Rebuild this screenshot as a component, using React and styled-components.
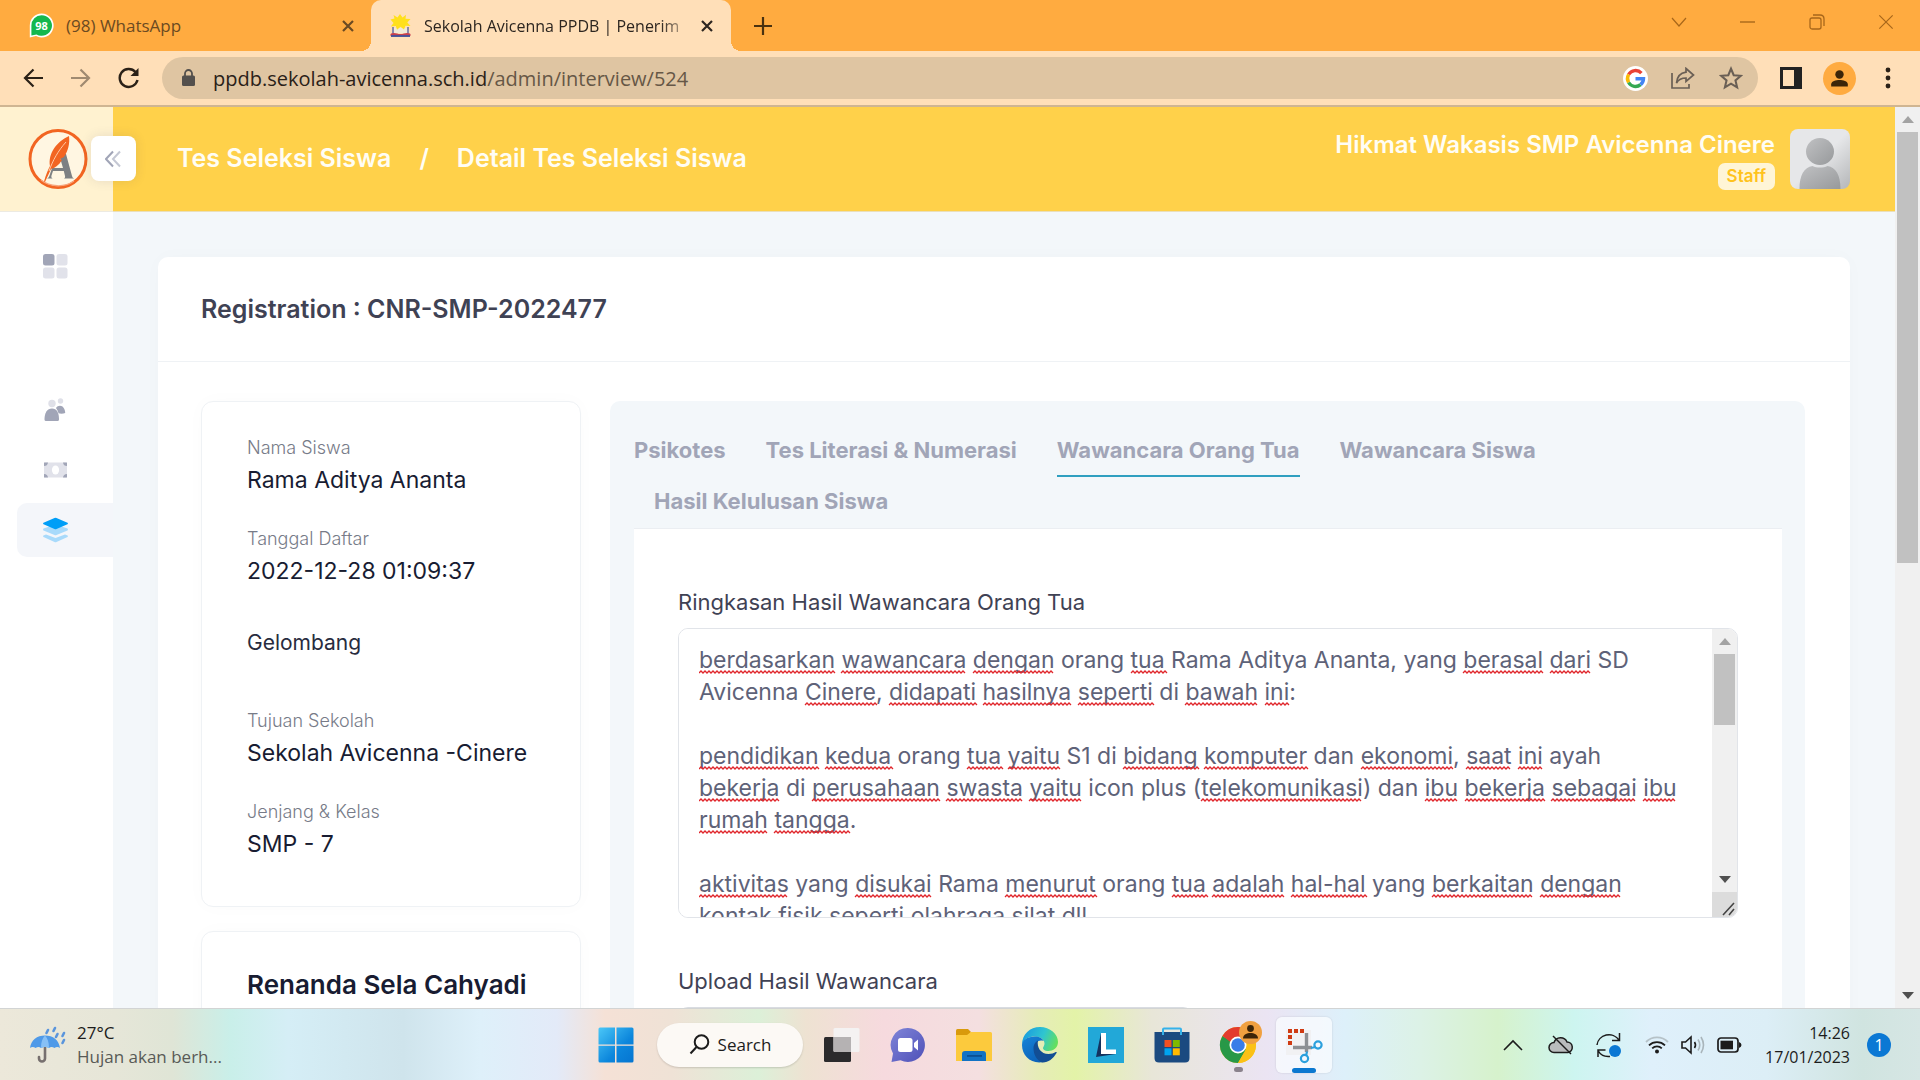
import React, { useLayoutEffect, useState } from "react";
import styled, { createGlobalStyle } from "styled-components";

const pageFont = `Inter, "Open Sans", sans-serif`;
const systemFont = `"Open Sans", "Noto Sans", sans-serif`;

const GlobalStyle = createGlobalStyle`
  *, *::before, *::after { box-sizing: border-box; }
  body { margin: 0; font-family: ${pageFont}; color: #181c32; background: #f3f7fa; }
  button { border: 0; padding: 0; background: none; font: inherit; color: inherit; cursor: pointer; }
  a { color: inherit; text-decoration: none; }
  h1, h2, p, dl, dd, dt, ul { margin: 0; padding: 0; }
  ul { list-style: none; }
  svg { display: block; flex: none; }
`;

const Screen = styled.div`
  height: 100vh;
  display: flex;
  flex-direction: column;
  overflow: hidden;
`;

/* ---------- browser chrome ---------- */

const TabStrip = styled.div`
  flex: none;
  height: 51px;
  display: flex;
  align-items: center;
  background: #ffab40;
  font-family: ${systemFont};
  font-size: 17px;
`;

const BrowserTab = styled.div`
  position: relative;
  align-self: stretch;
  width: ${(p) => (p.$active ? 360 : 371)}px;
  display: flex;
  align-items: center;
  gap: 12px;
  padding: 0 ${(p) => (p.$active ? 16 : 15)}px 0 ${(p) => (p.$active ? 18 : 29)}px;
  background: ${(p) => (p.$active ? "#ffdfb8" : "transparent")};
  color: ${(p) => (p.$active ? "#2d2620" : "#6b4a22")};
  font-size: ${(p) => (p.$active ? 16 : 17)}px;
  border-radius: 10px 10px 0 0;
  ${(p) =>
    p.$active &&
    `
    &::before, &::after {
      content: "";
      position: absolute;
      bottom: 0;
      width: 10px;
      height: 10px;
    }
    &::before { left: -10px; background: radial-gradient(circle at 0 0, transparent 10px, #ffdfb8 10px); }
    &::after { right: -10px; background: radial-gradient(circle at 100% 0, transparent 10px, #ffdfb8 10px); }
  `}
`;

const TabTitle = styled.span`
  flex: 1;
  white-space: nowrap;
  ${(p) => p.$fade && "mask-image: linear-gradient(90deg, #000 90%, rgba(0, 0, 0, 0.2));"}
`;

const IconButton = styled.button`
  flex: none;
  width: ${(p) => p.$w || 24}px;
  height: ${(p) => p.$h || 24}px;
  display: flex;
  align-items: center;
  justify-content: center;
`;

const NewTab = styled(IconButton)`
  margin-left: 20px;
  color: #4a3210;
`;

const WindowControls = styled.div`
  margin-left: auto;
  display: flex;
  padding-bottom: 8px;
  color: #a8671a;
`;

const Toolbar = styled.div`
  flex: none;
  height: 56px;
  display: flex;
  align-items: center;
  padding: 0 9px;
  background: #ffdfb8;
  border-bottom: 2px solid #cfb592;
  color: #2b2117;
`;

const AddressBar = styled.form`
  flex: 1;
  height: 42px;
  display: flex;
  align-items: center;
  margin: 0 9px;
  padding: 0 3px 0 18px;
  border-radius: 21px;
  background: #dfc5a2;
  color: #6a5f55;
`;

const UrlText = styled.a`
  flex: 1;
  margin-left: 16px;
  font-family: ${systemFont};
  font-size: 20px;
  color: #665746;

  b { font-weight: 400; color: #2a2118; }
`;

const ProfileDot = styled.span`
  width: 33px;
  height: 33px;
  border-radius: 50%;
  background: #ffab40;
  display: flex;
  align-items: center;
  justify-content: center;
`;

/* ---------- scroll bar ---------- */

const Track = styled.div`
  flex: none;
  width: ${(p) => p.$w}px;
  display: flex;
  flex-direction: column;
  background: #f0f0f0;
`;

const ArrowButton = styled.button`
  flex: none;
  height: 25px;
  display: flex;
  align-items: center;
  justify-content: center;
`;

const ThumbArea = styled.div`
  flex: 1;
  padding: 0 2px;
`;

const Thumb = styled.div`
  background: #c1c1c1;
`;

const Grip = styled.div`
  height: 25px;
  display: flex;
  align-items: flex-end;
  justify-content: flex-end;
  background: #dcdcdc;
`;

function ScrollBar({ width, thumb, grip }) {
  return (
    <Track $w={width}>
      <ArrowButton type="button" aria-label="Scroll up">
        <svg width="12" height="7"><path d="M0 7L6 0L12 7Z" fill="#a3a3a3" /></svg>
      </ArrowButton>
      <ThumbArea><Thumb style={{ height: thumb }} /></ThumbArea>
      <ArrowButton type="button" aria-label="Scroll down">
        <svg width="12" height="7"><path d="M0 0L6 7L12 0Z" fill="#505050" /></svg>
      </ArrowButton>
      {grip && (
        <Grip>
          <svg width="16" height="16"><path d="M2 14L13 2M8 14L13 8" stroke="#444" strokeWidth="1.6" /></svg>
        </Grip>
      )}
    </Track>
  );
}

/* ---------- web page ---------- */

const Viewport = styled.div`
  flex: 1;
  min-height: 0;
  display: flex;
  overflow: hidden;
`;

const Sidebar = styled.aside`
  flex: none;
  width: 113px;
  background: #fff;
`;

const Brand = styled.div`
  position: relative;
  height: 105px;
  display: flex;
  align-items: center;
  padding-left: 28px;
  background: #fff2d0;
  border-bottom: 1px solid #eceae2;
`;

const CollapseButton = styled.button`
  position: absolute;
  left: 91px;
  top: 29px;
  z-index: 1;
  width: 45px;
  height: 45px;
  display: flex;
  align-items: center;
  justify-content: center;
  border-radius: 8px;
  background: #fff;
  box-shadow: 0 0 12px rgba(60, 60, 90, 0.12);
`;

const SideNav = styled.nav`
  display: flex;
  flex-direction: column;
  padding: 27px 0 0 17px;
`;

const SideLink = styled.a`
  height: 54px;
  margin-bottom: ${(p) => p.$after || 6}px;
  display: flex;
  align-items: center;
  padding-left: 25px;
  border-radius: 10px 0 0 10px;
  background: ${(p) => (p.$active ? "#f4f6fa" : "transparent")};
`;

const Page = styled.div`
  flex: 1;
  min-width: 0;
  display: flex;
  flex-direction: column;
`;

const PageHeader = styled.header`
  flex: none;
  height: 105px;
  display: flex;
  align-items: center;
  justify-content: space-between;
  padding: 0 45px 0 64px;
  background: #ffd14a;
  border-bottom: 1px solid #eadfba;
  color: #fffdf4;
`;

const Crumbs = styled.nav`
  display: flex;
  gap: 28px;
  padding-bottom: 3px;
  font-size: 25px;
  line-height: 36px;
  font-weight: 600;
`;

const User = styled.div`
  display: flex;
  align-items: center;
  gap: 15px;
`;

const UserInfo = styled.div`
  display: flex;
  flex-direction: column;
  align-items: flex-end;
  gap: 2px;
  font-weight: 600;
`;

const UserName = styled.span`
  font-size: 24px;
  line-height: 32px;
`;

const Role = styled.span`
  padding: 0 9px;
  border-radius: 7px;
  background: #fff5d6;
  color: #ffc31c;
  font-size: 17px;
  line-height: 27px;
`;

const Main = styled.main`
  padding: 45px 45px 0;
`;

const Card = styled.section`
  background: #fff;
  border-radius: 10px;
  box-shadow: 0 0 20px rgba(76, 87, 125, 0.02);
`;

const CardHeader = styled.div`
  height: 105px;
  display: flex;
  align-items: center;
  padding: 0 43px;
  border-bottom: 1px solid #eff2f5;
`;

const CardTitle = styled.h1`
  font-size: 25px;
  line-height: 36px;
  font-weight: 600;
  color: #3f4254;
`;

const CardBody = styled.div`
  display: grid;
  grid-template-columns: 380px minmax(0, 1fr);
  gap: 29px;
  padding: 39px 45px 45px 43px;
`;

const Column = styled.div`
  display: flex;
  flex-direction: column;
  gap: 24px;
`;

const InfoCard = styled.section`
  padding: 32px 45px 44px;
  border: 1px solid #eff2f5;
  border-radius: 12px;
  background: #fff;
  box-shadow: 0 0 20px rgba(76, 87, 125, 0.02);
`;

const InfoList = styled.dl`
  display: flex;
  flex-direction: column;
  gap: 27px;
`;

const InfoItem = styled.div`
  min-height: 64px;
`;

const InfoLabel = styled.dt`
  font-size: ${(p) => (p.$large ? 21 : 18)}px;
  line-height: ${(p) => (p.$large ? 54 : 28)}px;
  font-weight: ${(p) => (p.$large ? 400 : 300)};
  color: ${(p) => (p.$large ? "#282c3e" : "#777b88")};
`;

const InfoValue = styled.dd`
  font-size: 23px;
  line-height: 36px;
  white-space: nowrap;
`;

const PersonName = styled.h2`
  font-size: 26px;
  line-height: 42px;
  font-weight: 600;
  white-space: nowrap;
`;

const Panel = styled.section`
  padding: 25px 23px 0 24px;
  border-radius: 10px;
  background: #f3f7fa;
`;

const Tabs = styled.nav`
  display: flex;
  flex-wrap: wrap;
  border-bottom: 1px solid #ebeef2;
`;

const TabLink = styled.a`
  margin: 0 20px;
  border-bottom: 2px solid ${(p) => (p.$active ? "#2f9fc0" : "transparent")};
  font-size: 22px;
  line-height: 49px;
  font-weight: 700;
  color: #a1a5b7;

  &:first-child { margin-left: 0; }
`;

const TabContent = styled.div`
  padding: 58px 44px 40px;
  background: #fff;
`;

const FieldLabel = styled.label`
  display: block;
  margin-bottom: 11px;
  font-size: 22px;
  line-height: 30px;
  color: #3f4254;
`;

const TextBox = styled.div`
  position: relative;
  display: flex;
  height: 290px;
  margin-bottom: 48px;
  border: 1px solid #e1e4e9;
  border-radius: 10px;
  overflow: hidden;
`;

const Summary = styled.textarea`
  flex: 1;
  min-width: 0;
  padding: 15px 0 0 20px;
  border: 0;
  outline: 0;
  resize: none;
  overflow: hidden;
  white-space: pre;
  background: #fff;
  color: #5e6278;
  font: 400 23px/32px ${pageFont};
`;

const Squiggles = styled.svg`
  position: absolute;
  left: 20px;
  top: 15px;
  pointer-events: none;
`;

const FileField = styled.input`
  width: 515px;
  height: 60px;
  padding: 12px 20px;
  border: 1px solid #d9dce1;
  border-radius: 10px;
  font: 400 22px/32px ${pageFont};
`;

const summaryLines = [
  "berdasarkan wawancara dengan orang tua Rama Aditya Ananta, yang berasal dari SD",
  "Avicenna Cinere, didapati hasilnya seperti di bawah ini:",
  "",
  "pendidikan kedua orang tua yaitu S1 di bidang komputer dan ekonomi, saat ini ayah",
  "bekerja di perusahaan swasta yaitu icon plus (telekomunikasi) dan ibu bekerja sebagai ibu",
  "rumah tangga.",
  "",
  "aktivitas yang disukai Rama menurut orang tua adalah hal-hal yang berkaitan dengan",
  "kontak fisik seperti olahraga silat dll",
];

const knownWords = new Set(
  "orang Rama Aditya Ananta yang SD Avicenna di S1 dan ayah icon plus".split(" ")
);

function wave(x, y, width) {
  let d = `M${x} ${y + 1}`;
  for (let i = 0; i < width; i += 4) d += "l2 -2l2 2";
  return d;
}

function SpellMarks() {
  const [paths, setPaths] = useState([]);
  useLayoutEffect(() => {
    const ctx = document.createElement("canvas").getContext("2d");
    ctx.font = `400 23px ${pageFont}`;
    const found = [];
    summaryLines.forEach((line, row) => {
      for (const match of line.matchAll(/[\w-]+/g)) {
        if (knownWords.has(match[0])) continue;
        const x = ctx.measureText(line.slice(0, match.index)).width;
        const width = ctx.measureText(match[0]).width;
        found.push(wave(Math.round(x), row * 32 + 28, width - 2));
      }
    });
    setPaths(found);
  }, []);
  return (
    <Squiggles width="1010" height="270" aria-hidden="true">
      {paths.map((d) => (
        <path key={d} d={d} fill="none" stroke="#e0262b" strokeWidth="1.3" />
      ))}
    </Squiggles>
  );
}

/* ---------- taskbar ---------- */

const Taskbar = styled.footer`
  flex: none;
  height: 72px;
  display: grid;
  grid-template-columns: 1fr auto 1fr;
  border-top: 1px solid #d2d4d4;
  font-family: ${systemFont};
  font-size: 17px;
  color: #1c1c1c;
  background: linear-gradient(
    90deg,
    #ece8da 0%, #e6e6d8 6%, #dfe5d6 9%, #c9efe9 12%, #d5eef6 15%, #cfe4ec 21%,
    #def0fa 25%, #e3eaf8 29%, #f5e1d6 31.5%, #efe2d6 35%, #dcf0d8 39.5%, #eee2d2 42%,
    #f6dade 46%, #f4dfe0 51%, #e6ecb8 54%, #e3f3a8 56%, #e8e6d8 60%, #ebe4f3 66%,
    #ddf0fa 70%, #dcf2e6 74%, #d6f2cc 78%, #cdf5f0 82%, #dff0fb 86%, #dceef6 92%,
    #d0e4e0 97%, #d6e6e4 100%
  );
`;

const Weather = styled.button`
  justify-self: start;
  display: flex;
  align-items: center;
  gap: 10px;
  padding-left: 29px;
  text-align: left;
  line-height: 24px;
  color: #585a56;

  strong { display: block; font-weight: 400; color: #1c1c1c; }
`;

const Apps = styled.div`
  display: flex;
  align-items: center;
`;

const AppButton = styled.button`
  position: relative;
  width: 66px;
  height: 56px;
  display: flex;
  align-items: center;
  justify-content: center;

  &::after {
    content: "";
    position: absolute;
    bottom: ${(p) => (p.$active ? 0 : 1)}px;
    width: ${(p) => (p.$active ? 24 : p.$running ? 9 : 0)}px;
    height: 5px;
    border-radius: 3px;
    background: ${(p) => (p.$active ? "#0b78d0" : "#8a828c")};
  }
`;

const ActiveTile = styled.span`
  width: 56px;
  height: 56px;
  display: flex;
  align-items: center;
  justify-content: center;
  border-radius: 6px;
  background: rgba(250, 252, 255, 0.75);
  box-shadow: 0 0 2px rgba(0, 0, 0, 0.15);
`;

const SearchPill = styled.button`
  width: 146px;
  height: 44px;
  margin: 0 6px 0 8px;
  display: flex;
  align-items: center;
  justify-content: center;
  gap: 8px;
  border-radius: 22px;
  background: #fcf9f5;
  box-shadow: 0 1px 2px rgba(0, 0, 0, 0.15);
`;

const Tray = styled.div`
  justify-self: end;
  display: flex;
  align-items: center;
  padding-right: 29px;
`;

const Clock = styled.time`
  margin: 0 17px 0 12px;
  text-align: right;
  font-size: 16px;
  line-height: 24px;

  span { display: block; }
`;

const Notice = styled.span`
  width: 24px;
  height: 24px;
  border-radius: 50%;
  background: #0b78d4;
  color: #fff;
  font-size: 16px;
  line-height: 24px;
  text-align: center;
`;

/* ---------- drawings ---------- */

const Cross = ({ size = 12, w = 2.2 }) => (
  <svg width={size} height={size} viewBox="0 0 12 12">
    <path d="M1 1L11 11M11 1L1 11" stroke="currentColor" strokeWidth={w} />
  </svg>
);

const PersonShape = ({ size, fill = "#3c2508" }) => (
  <svg width={size} height={size} viewBox="0 0 24 24" fill={fill}>
    <circle cx="12" cy="7.5" r="4.8" />
    <path d="M2.5 21v-2.5C2.5 15 8 13.6 12 13.6s9.5 1.4 9.5 4.9V21Z" />
  </svg>
);

const GoogleIcon = () => (
  <svg width="25" height="25" viewBox="0 0 25 25">
    <circle cx="12.5" cy="12.5" r="12.5" fill="#fff" />
    <g fill="none" strokeWidth="3.4">
      <path d="M18.4 7.1A8 8 0 0 0 5.6 8.5" stroke="#ea4335" />
      <path d="M5.6 8.5A8 8 0 0 0 5.6 16.5" stroke="#fbbc05" />
      <path d="M5.6 16.5A8 8 0 0 0 17.6 18.6" stroke="#34a853" />
      <path d="M17.6 18.6A8 8 0 0 0 20.5 12.7H12.5" stroke="#4285f4" />
    </g>
  </svg>
);

const WhatsAppIcon = () => (
  <svg width="25" height="25" viewBox="0 0 25 25">
    <path d="M12.5.5a12 12 0 1 1-5.5 22.6L.8 24.500V12.500A12 12 0 0 1 12.500.5Z" fill="#fff" />
    <path d="M12.5 2.2a10.300 10.300 0 1 1-5 19.200L2.400 22.500V12.500A10.300 10.300 0 0 1 12.500 2.200Z" fill="#14b84e" />
    <text x="12.5" y="16.5" fontSize="11" fontWeight="700" fontFamily="Open Sans, sans-serif" fill="#fff" textAnchor="middle">98</text>
  </svg>
);

const SchoolIcon = () => (
  <svg width="23" height="24" viewBox="0 0 23 24">
    <path d="M4 13V21M19 13V21" stroke="#5a66a6" strokeWidth="1.4" />
    <path d="M5 14h13v5H5Z" fill="#f1e9d8" />
    <path d="M2 19.5c4-1.500 6 .5 9.500.5s5.500-2 9.500-.5l1 2H1Z" fill="#c8404e" />
    <path d="M2 22h19" stroke="#3c4a98" strokeWidth="1.8" />
    <path d="M1.500 5.500l4-1L4.500 1l4 2.500L11 0l2.500 3.500L17 .8l-.5 4 5 .2-3.200 3.500L21.500 12l-5-.3-1.500 3.800-3.500-2.800L8 15.800 6.800 12l-5 .5L4.500 9Z" fill="#ffe01c" />
  </svg>
);

const Logo = () => (
  <svg width="60" height="60" viewBox="0 0 60 60">
    <ellipse cx="30" cy="30" rx="28" ry="28.5" fill="#fff6e2" stroke="#f26522" strokeWidth="3" />
    <path d="M13 51C22 58 36 59 46 52" fill="none" stroke="#f8a57c" strokeWidth="1.3" />
    <path d="M33 25h5l6 22c.5 1.5 1 2 2 2.5h-10c1.200-.6 1.300-1.500.9-3L35.800 42H25l-1.500 4.500c-.4 1.500 0 2.500 1.200 3H19c1.500-.7 2-1.500 2.500-3L24 39h11l-3.200-11Z" fill="#7d8083" />
    <path d="M41 7c1 8-1 15-5 21l-4 2 2 1c-3 5-7 8-11 9l-6 13-1-.4C18 45 20 41 22 37c-2-12 6-24 19-30Z" fill="#f26522" />
    <path d="M38 13C30 22 25 31 21 42" stroke="#ffc9a5" strokeWidth="1" fill="none" />
  </svg>
);

const Avatar = () => (
  <svg width="60" height="60" viewBox="0 0 60 60" role="img" aria-label="Profile picture">
    <defs>
      <linearGradient id="avatarBack" x1="0" y1="0" x2="1" y2="1">
        <stop offset="0.5" stopColor="#e6e7e9" />
        <stop offset="1" stopColor="#b4b6b8" />
      </linearGradient>
      <linearGradient id="avatarBody" x1="0" y1="0" x2="1" y2="1">
        <stop offset="0" stopColor="#c0c1c3" />
        <stop offset="1" stopColor="#97999b" />
      </linearGradient>
      <clipPath id="avatarClip"><rect width="60" height="60" rx="8" /></clipPath>
    </defs>
    <g clipPath="url(#avatarClip)">
      <rect width="60" height="60" fill="url(#avatarBack)" />
      <ellipse cx="30" cy="22.5" rx="14" ry="13.5" fill="url(#avatarBody)" />
      <path d="M9.5 60C9.5 46 14 38.5 22.5 37c4 2 11 2 15 0C46 38.5 50.5 46 50.5 60Z" fill="url(#avatarBody)" />
    </g>
  </svg>
);

const GridIcon = () => (
  <svg width="26" height="26" viewBox="0 0 26 26" fill="#e1e2ea">
    <rect x="1" y="1" width="11.5" height="11.5" rx="2.5" fill="#a1a5b7" />
    <rect x="14.5" y="1" width="11" height="11.5" rx="2.5" />
    <rect x="1" y="14.5" width="11.5" height="11" rx="2.5" />
    <rect x="14.5" y="14.5" width="11" height="11" rx="2.5" />
  </svg>
);

const PeopleIcon = () => (
  <svg width="26" height="26" viewBox="0 0 26 26">
    <circle cx="10" cy="6.5" r="3.7" fill="#dfe0e8" />
    <circle cx="18.5" cy="4" r="2.7" fill="#dfe0e8" />
    <path d="M14 11c2-3.5 7-3 8.300 1 .6 1.600.9 2.500.9 4-2 .8-5 .8-6.700.2C16 14 15 12.500 14 11Z" fill="#a1a5b7" />
    <path d="M2.5 22.5C2.5 16 5 11.5 10 11.5s7 4.500 7 11c0 1-.8 1.500-2 1.500H4.500c-1.200 0-2-.5-2-1.500Z" fill="#a1a5b7" />
  </svg>
);

const CashIcon = () => (
  <svg width="26" height="26" viewBox="0 0 26 26">
    <rect x="2" y="5.5" width="23" height="15" rx="1.5" fill="#e1e2ea" />
    <ellipse cx="13.5" cy="13" rx="3.6" ry="4.6" fill="#fff" />
    <path d="M2 9V5.500h4A4 4 0 0 1 2 9ZM25 9V5.500h-4A4 4 0 0 0 25 9ZM2 17v3.500h4A4 4 0 0 0 2 17ZM25 17v3.500h-4A4 4 0 0 1 25 17Z" fill="#a1a5b7" />
  </svg>
);

const LayersIcon = () => (
  <svg width="26" height="26" viewBox="0 0 26 26">
    <path d="M1.5 18.5l2.5-1L13.500 21 23 17.500l2.500 1c.6.4.6 1 0 1.400L14.500 25q-1 .4-2 0L1.500 19.900c-.6-.4-.6-1 0-1.400Z" fill="#a8dafb" />
    <path d="M1.5 11.5l12-4 12 4c.6.4.6 1.500 0 1.900L14.500 18q-1 .4-2 0L1.500 13.400c-.6-.4-.6-1.500 0-1.900Z" fill="#a8dafb" />
    <path d="M1.5 5.8L12.500.9q1-.4 2 0l11 4.900c.6.4.6 1 0 1.400L14.500 12q-1 .5-2 0L1.500 7.200c-.6-.4-.6-1 0-1.400Z" fill="#009ef7" />
  </svg>
);

const UmbrellaIcon = () => (
  <svg width="38" height="38" viewBox="0 0 38 38">
    <path d="M16 19v13.500a3 3 0 0 1-6 0V31" fill="none" stroke="#77706f" strokeWidth="2.6" strokeLinecap="round" />
    <path d="M1 22C2 14 8 9.500 16 9.500S30 14 31 22c-1.500-1.500-4-1.500-5.500 0-2-1.500-4-1.500-5.500 0-2-1.500-6-1.500-8 0-1.500-1.500-3.500-1.500-5.500 0-1.500-1.500-4-1.500-5.500 0Z" fill="#4f9ae8" />
    <path d="M12 22c0-6 1.500-10 4-12.500 2.500 2.500 4 6.500 4 12.500-2-1.500-6-1.500-8 0Z" fill="#86c0f6" />
    <path d="M19 4l-1.500 3M26 2l-1.500 3M28.500 8l-1.500 3M35 7l-1.500 3M35 14l-1.500 3" stroke="#5a95dc" strokeWidth="2.6" strokeLinecap="round" />
  </svg>
);

const StartIcon = () => (
  <svg width="36" height="36" viewBox="0 0 36 36">
    <defs>
      <linearGradient id="startFill" gradientUnits="userSpaceOnUse" x1="0" y1="0" x2="36" y2="36">
        <stop offset="0" stopColor="#4cc9f8" />
        <stop offset="0.6" stopColor="#0c86dc" />
        <stop offset="1" stopColor="#0574d0" />
      </linearGradient>
    </defs>
    <path d="M2 .5h15v17H.5V2Q.5.5 2 .5ZM18.500.5H34q1.500 0 1.500 1.500v15.500h-17ZM.5 18.800H17v16.700H2Q.5 35.500.5 34ZM18.500 18.800h17V34q0 1.500-1.500 1.500H18.500Z" fill="url(#startFill)" />
  </svg>
);

const TaskViewIcon = () => (
  <svg width="36" height="36" viewBox="0 0 36 36">
    <rect x="0" y="10" width="27" height="25" rx="1.5" fill="#2b2a2c" />
    <rect x="9.5" y="1" width="26" height="24" rx="1.5" fill="#f4f2f2" />
    <path d="M9.5 10H27v15H11q-1.500 0-1.500-1.500Z" fill="#b5b2b3" />
  </svg>
);

const ChatIcon = () => (
  <svg width="36" height="36" viewBox="0 0 36 36">
    <defs>
      <linearGradient id="chatFill" x1="0" y1="0" x2="1" y2="1">
        <stop offset="0" stopColor="#7f85d8" />
        <stop offset="1" stopColor="#4f50b8" />
      </linearGradient>
    </defs>
    <path d="M18 1a17 17 0 1 1-7.5 32.300L1.500 35 3 26.500A17 17 0 0 1 18 1Z" fill="url(#chatFill)" />
    <rect x="8" y="11" width="14.5" height="14" rx="2.5" fill="#fff" />
    <path d="M24 16l4-3.500v11L24 20Z" fill="#fff" />
  </svg>
);

const FolderIcon = () => (
  <svg width="36" height="36" viewBox="0 0 36 36">
    <path d="M0 3.500Q0 2 1.500 2H12l3 3-3 4H0Z" fill="#d99a0c" />
    <path d="M0 8h11l4-3h19.500Q36 5 36 6.500V34H0Z" fill="#fcca3d" />
    <path d="M6 34v-7q0-3 3-3h18q3 0 3 3v7Z" fill="#1272c4" />
    <rect x="11" y="28" width="15" height="1.8" fill="#0b4f92" />
  </svg>
);

const EdgeIcon = () => (
  <svg width="38" height="38" viewBox="0 0 38 38">
    <defs>
      <linearGradient id="edgeTop" x1="0" y1="0.3" x2="1" y2="0.6">
        <stop offset="0" stopColor="#1a9be0" />
        <stop offset="0.55" stopColor="#2fc5d0" />
        <stop offset="1" stopColor="#66e05a" />
      </linearGradient>
      <linearGradient id="edgeLeft" x1="0" y1="0" x2="0.6" y2="1">
        <stop offset="0" stopColor="#1683d8" />
        <stop offset="1" stopColor="#0c62b8" />
      </linearGradient>
    </defs>
    <path d="M1 19C1 8 9 1 19 1s18 7 18 15c0 6-5 9-9.500 9-4 0-5.500-1.500-5.500-3 0-1 1.500-2 1.500-4.500 0-4-4-7-9.500-7S2 13 1 19Z" fill="url(#edgeTop)" />
    <path d="M1 19c0-5 6-8.500 12.500-8.500 5 0 8 2 9.200 4.500-6-2-9 2.500-8.200 8 .8 6 6 11 11.500 12C12 40 1 31 1 19Z" fill="url(#edgeLeft)" />
    <path d="M12.5 22c0-3 2-6.500 4.500-7.500-1.500 7 3 13.500 10.500 13.500 3 0 5.500-1 7.200-2 .8-.4 1.300.3.8 1C32 33 26.500 37 21 36.500 15.500 34 12.500 28.500 12.500 22Z" fill="#124e94" />
  </svg>
);

const LIcon = () => (
  <svg width="36" height="36" viewBox="0 0 36 36">
    <rect width="36" height="36" fill="#22a8d8" />
    <path d="M13 6L8 30l20-3H14Z" fill="#14335f" />
    <rect x="13" y="6" width="5" height="21" fill="#fff" />
    <rect x="13" y="22.5" width="15" height="4.5" fill="#fff" />
  </svg>
);

const StoreIcon = () => (
  <svg width="36" height="36" viewBox="0 0 36 36">
    <path d="M.5 5h35v26q0 4.500-4.500 4.500H5Q.5 35.500.5 31Z" fill="#1b4a80" />
    <path d="M9 8V2.500Q9 1.500 10 1.500h16q1 0 1 1V8" fill="none" stroke="#35b2ea" strokeWidth="2" />
    <rect x="10.5" y="13" width="7" height="7" fill="#f25022" />
    <rect x="18.8" y="13" width="7" height="7" fill="#7fba00" />
    <rect x="10.5" y="21.3" width="7" height="7" fill="#00a4ef" />
    <rect x="18.8" y="21.3" width="7" height="7" fill="#ffb900" />
  </svg>
);

const ChromeIcon = () => (
  <svg width="48" height="48" viewBox="0 0 48 48">
    <circle cx="24" cy="24" r="18" fill="#fbc116" />
    <path d="M24 24L8.400 15A18 18 0 0 0 24 42L31.800 28.500Z" fill="#279847" />
    <path d="M24 16h16.100A18 18 0 0 1 24 42L32 28.500Z" fill="#fbc116" />
    <path d="M8.400 15A18 18 0 0 1 40.100 16H24a8 8 0 0 0-7.500 5Z" fill="#e33b2e" />
    <circle cx="24" cy="24" r="8.5" fill="#fff" />
    <circle cx="24" cy="24" r="6.8" fill="#3a7de8" />
    <circle cx="36.500" cy="11.500" r="11.500" fill="#f0a040" />
    <circle cx="36.500" cy="7.500" r="3.4" fill="#3c2508" />
    <path d="M29 17.500c0-4 4-5.500 7.500-5.500s7.500 1.500 7.500 5.500Z" fill="#3c2508" />
  </svg>
);

const SnipIcon = () => (
  <svg width="38" height="38" viewBox="0 0 38 38">
    <rect x="1" y="4" width="25" height="25" fill="#f1f1f3" />
    <path d="M3 3h4v4H3ZM9 3h4v4H9ZM15 3h4v4h-4ZM3 9h4v4H3ZM3 15h4v4H3Z" fill="#cf3a12" />
    <path d="M21.500 7v19M8 21.500h19" stroke="#8d9094" strokeWidth="3.4" />
    <circle cx="33" cy="19" r="3.6" fill="none" stroke="#2ba0dd" strokeWidth="2.2" />
    <circle cx="19.5" cy="32.5" r="3.6" fill="none" stroke="#2ba0dd" strokeWidth="2.2" />
    <path d="M26 22l4.500-1M22 25.500l-1 4.500" stroke="#2ba0dd" strokeWidth="2.2" />
  </svg>
);

export default function App() {
  return (
    <Screen>
      <GlobalStyle />
      <TabStrip>
        <BrowserTab>
          <WhatsAppIcon />
          <TabTitle>(98) WhatsApp</TabTitle>
          <IconButton type="button" aria-label="Close tab" $w={16}><Cross /></IconButton>
        </BrowserTab>
        <BrowserTab $active>
          <SchoolIcon />
          <TabTitle $fade>Sekolah Avicenna PPDB | Penerim</TabTitle>
          <IconButton type="button" aria-label="Close tab" $w={16}><Cross /></IconButton>
        </BrowserTab>
        <NewTab type="button" aria-label="New tab">
          <svg width="18" height="18"><path d="M9 0V18M0 9H18" stroke="currentColor" strokeWidth="2.2" /></svg>
        </NewTab>
        <WindowControls>
          <IconButton type="button" aria-label="Search tabs" $w={69}>
            <svg width="16" height="10"><path d="M1 1L8 9L15 1" fill="none" stroke="currentColor" strokeWidth="1.2" /></svg>
          </IconButton>
          <IconButton type="button" aria-label="Minimize" $w={69}>
            <svg width="15" height="2"><path d="M0 1H15" stroke="currentColor" strokeWidth="1.4" /></svg>
          </IconButton>
          <IconButton type="button" aria-label="Restore" $w={69}>
            <svg width="16" height="16" fill="none" stroke="currentColor" strokeWidth="1.3">
              <rect x="1" y="4" width="11" height="11" rx="2" />
              <path d="M4 1H11Q15 1 15 5V12" />
            </svg>
          </IconButton>
          <IconButton type="button" aria-label="Close" $w={69}><Cross size={16} w={0.9} /></IconButton>
        </WindowControls>
      </TabStrip>

      <Toolbar>
        <IconButton type="button" aria-label="Back" $w={48}>
          <svg width="20" height="20" fill="none" stroke="#2b2117" strokeWidth="2.2"><path d="M20 10H2M10.500 1.500L2 10L10.500 18.500" /></svg>
        </IconButton>
        <IconButton type="button" aria-label="Forward" $w={48}>
          <svg width="20" height="20" fill="none" stroke="#a08a70" strokeWidth="2.2"><path d="M0 10H18M9.500 1.500L18 10L9.500 18.500" /></svg>
        </IconButton>
        <IconButton type="button" aria-label="Reload" $w={48}>
          <svg width="22" height="22" fill="none" stroke="#2b2117" strokeWidth="2.4">
            <path d="M17.500 5A9 9 0 1 0 19.500 13" />
            <path d="M20.500 1V9H12.500Z" fill="#2b2117" stroke="none" />
          </svg>
        </IconButton>
        <AddressBar>
          <svg width="17" height="18" viewBox="0 0 17 18">
            <rect x="2" y="6.5" width="13" height="10.5" rx="1.5" fill="#54504d" />
            <path d="M5 7V4.500a3.500 3.500 0 0 1 7 0V7" fill="none" stroke="#54504d" strokeWidth="1.8" />
          </svg>
          <UrlText href="#interview"><b>ppdb.sekolah-avicenna.sch.id</b>/admin/interview/524</UrlText>
          <IconButton type="button" aria-label="Google" $w={48}><GoogleIcon /></IconButton>
          <IconButton type="button" aria-label="Share" $w={48}>
            <svg width="24" height="22" fill="none" stroke="currentColor" strokeWidth="1.7">
              <path d="M1 6V21H18V17" />
              <path d="M15 1.500L22.500 8L15 14.500V11C10.500 11 7.500 12.500 5.500 16C6 10 9.500 6 15 5.200Z" />
            </svg>
          </IconButton>
          <IconButton type="button" aria-label="Bookmark" $w={48}>
            <svg width="24" height="24" viewBox="0 0 22 22" fill="none" stroke="currentColor" strokeWidth="1.9">
              <path d="M11 2.500L13.500 8.400L20 9L15.100 13.200L16.600 19.500L11 16.200L5.400 19.500L6.900 13.200L2 9L8.500 8.400Z" />
            </svg>
          </IconButton>
        </AddressBar>
        <IconButton type="button" aria-label="Side panel" $w={48}>
          <svg width="22" height="22"><rect x="1.5" y="1.5" width="19" height="19" fill="none" stroke="#222" strokeWidth="3" /><rect x="14" y="1" width="7" height="20" fill="#222" /></svg>
        </IconButton>
        <IconButton type="button" aria-label="Profile" $w={49}>
          <ProfileDot><PersonShape size={21} /></ProfileDot>
        </IconButton>
        <IconButton type="button" aria-label="Menu" $w={47}>
          <svg width="6" height="22" fill="#2b2117"><circle cx="3" cy="3" r="2.4" /><circle cx="3" cy="11" r="2.4" /><circle cx="3" cy="19" r="2.4" /></svg>
        </IconButton>
      </Toolbar>

      <Viewport>
        <Sidebar>
          <Brand>
            <Logo />
            <CollapseButton type="button" aria-label="Collapse menu">
              <svg width="18" height="18" fill="none" strokeWidth="2">
                <path d="M8 1.500L1 9L8 16.500" stroke="#a1a5b7" />
                <path d="M15 1.500L8 9L15 16.500" stroke="#c4c7d3" />
              </svg>
            </CollapseButton>
          </Brand>
          <SideNav aria-label="Main">
            <SideLink href="#dashboard" aria-label="Dashboard" $after={90}><GridIcon /></SideLink>
            <SideLink href="#students" aria-label="Students"><PeopleIcon /></SideLink>
            <SideLink href="#payments" aria-label="Payments"><CashIcon /></SideLink>
            <SideLink href="#selection" aria-label="Selection" $active><LayersIcon /></SideLink>
          </SideNav>
        </Sidebar>

        <Page>
          <PageHeader>
            <Crumbs aria-label="Breadcrumb">
              <a href="#selection">Tes Seleksi Siswa</a>
              <span>/</span>
              <a href="#detail">Detail Tes Seleksi Siswa</a>
            </Crumbs>
            <User>
              <UserInfo>
                <UserName>Hikmat Wakasis SMP Avicenna Cinere</UserName>
                <Role>Staff</Role>
              </UserInfo>
              <Avatar />
            </User>
          </PageHeader>

          <Main>
            <Card>
              <CardHeader><CardTitle>Registration : CNR-SMP-2022477</CardTitle></CardHeader>
              <CardBody>
                <Column>
                  <InfoCard>
                    <InfoList>
                      <InfoItem><InfoLabel>Nama Siswa</InfoLabel><InfoValue>Rama Aditya Ananta</InfoValue></InfoItem>
                      <InfoItem><InfoLabel>Tanggal Daftar</InfoLabel><InfoValue>2022-12-28 01:09:37</InfoValue></InfoItem>
                      <InfoItem><InfoLabel $large>Gelombang</InfoLabel></InfoItem>
                      <InfoItem><InfoLabel>Tujuan Sekolah</InfoLabel><InfoValue>Sekolah Avicenna -Cinere</InfoValue></InfoItem>
                      <InfoItem><InfoLabel>Jenjang &amp; Kelas</InfoLabel><InfoValue>SMP - 7</InfoValue></InfoItem>
                    </InfoList>
                  </InfoCard>
                  <InfoCard><PersonName>Renanda Sela Cahyadi</PersonName></InfoCard>
                </Column>

                <Panel>
                  <Tabs aria-label="Test sections">
                    <TabLink href="#psikotes">Psikotes</TabLink>
                    <TabLink href="#literasi">Tes Literasi &amp; Numerasi</TabLink>
                    <TabLink href="#orang-tua" $active>Wawancara Orang Tua</TabLink>
                    <TabLink href="#siswa">Wawancara Siswa</TabLink>
                    <TabLink href="#hasil">Hasil Kelulusan Siswa</TabLink>
                  </Tabs>
                  <TabContent>
                    <FieldLabel htmlFor="summary">Ringkasan Hasil Wawancara Orang Tua</FieldLabel>
                    <TextBox>
                      <Summary id="summary" spellCheck={false} defaultValue={summaryLines.join("\n")} />
                      <SpellMarks />
                      <ScrollBar width={25} thumb={71} grip />
                    </TextBox>
                    <FieldLabel htmlFor="upload">Upload Hasil Wawancara</FieldLabel>
                    <FileField id="upload" type="file" />
                  </TabContent>
                </Panel>
              </CardBody>
            </Card>
          </Main>
        </Page>
        <ScrollBar width={25} thumb={431} />
      </Viewport>

      <Taskbar>
        <Weather type="button">
          <UmbrellaIcon />
          <span><strong>27°C</strong>Hujan akan berh...</span>
        </Weather>
        <Apps>
          <AppButton type="button" aria-label="Start"><StartIcon /></AppButton>
          <SearchPill type="button">
            <svg width="21" height="21" fill="none" stroke="#1c1c1c" strokeWidth="2"><circle cx="12.5" cy="8" r="6.8" /><path d="M7.500 13L1.500 19.500" /></svg>
            Search
          </SearchPill>
          <AppButton type="button" aria-label="Task view"><TaskViewIcon /></AppButton>
          <AppButton type="button" aria-label="Chat"><ChatIcon /></AppButton>
          <AppButton type="button" aria-label="Files"><FolderIcon /></AppButton>
          <AppButton type="button" aria-label="Edge"><EdgeIcon /></AppButton>
          <AppButton type="button" aria-label="L"><LIcon /></AppButton>
          <AppButton type="button" aria-label="Store"><StoreIcon /></AppButton>
          <AppButton type="button" aria-label="Chrome" $running><ChromeIcon /></AppButton>
          <AppButton type="button" aria-label="Snipping tool" $active><ActiveTile><SnipIcon /></ActiveTile></AppButton>
        </Apps>
        <Tray>
          <IconButton type="button" aria-label="Hidden icons" $w={48}>
            <svg width="20" height="12"><path d="M1 11L10 2L19 11" fill="none" stroke="#1c1c1c" strokeWidth="1.6" /></svg>
          </IconButton>
          <IconButton type="button" aria-label="OneDrive" $w={48}>
            <svg width="26" height="20" fill="none" stroke="#1c1c1c" strokeWidth="1.5">
              <path d="M6 17.500A5 5 0 0 1 6 7.500A7 7 0 0 1 19 7A5.300 5.300 0 0 1 20 17.500Z" fill="#b9bcbd" />
              <path d="M5 1L23 19" />
            </svg>
          </IconButton>
          <IconButton type="button" aria-label="Update" $w={48}>
            <svg width="26" height="26" fill="none" stroke="#1c1c1c" strokeWidth="1.5">
              <path d="M1 13A12 11.500 0 0 1 23 8M23.500 1V8.500H16M2 18.500A12 11.500 0 0 0 14 24.500M2 25V18H9.500" />
              <circle cx="19" cy="19" r="6" fill="#0b78d4" stroke="none" />
            </svg>
          </IconButton>
          <IconButton type="button" aria-label="Wi-Fi" $w={48}>
            <svg width="24" height="18" viewBox="0 0 24 18" fill="none" stroke="#1c1c1c" strokeWidth="1.8">
              <path d="M1 6A15.500 15.500 0 0 1 23 6" stroke="#b6c2c8" />
              <path d="M4 9.300A11.500 11.500 0 0 1 20 9.300M7.200 12.300A7 7 0 0 1 16.800 12.300" />
              <circle cx="12" cy="15.5" r="2" fill="#1c1c1c" stroke="none" />
            </svg>
          </IconButton>
          <IconButton type="button" aria-label="Volume">
            <svg width="24" height="20" viewBox="0 0 24 20" fill="none" stroke="#1c1c1c" strokeWidth="1.6">
              <path d="M1 7H4.500L10 2V18L4.500 13H1ZM13.500 7Q15.500 10 13.500 13" />
              <path d="M17 4.500Q20.500 10 17 15.500M20 2Q25 10 20 18" stroke="#a9b5bb" />
            </svg>
          </IconButton>
          <IconButton type="button" aria-label="Battery" $w={48}>
            <svg width="25" height="16" viewBox="0 0 25 16">
              <rect x="1" y="1" width="20" height="14" rx="3" fill="none" stroke="#1c1c1c" strokeWidth="1.7" />
              <rect x="3.5" y="3.7" width="12.5" height="8.6" fill="#1c1c1c" />
              <path d="M22 5Q24.500 6 24.500 8T22 11Z" fill="#1c1c1c" />
            </svg>
          </IconButton>
          <Clock><span>14:26</span><span>17/01/2023</span></Clock>
          <Notice>1</Notice>
        </Tray>
      </Taskbar>
    </Screen>
  );
}
